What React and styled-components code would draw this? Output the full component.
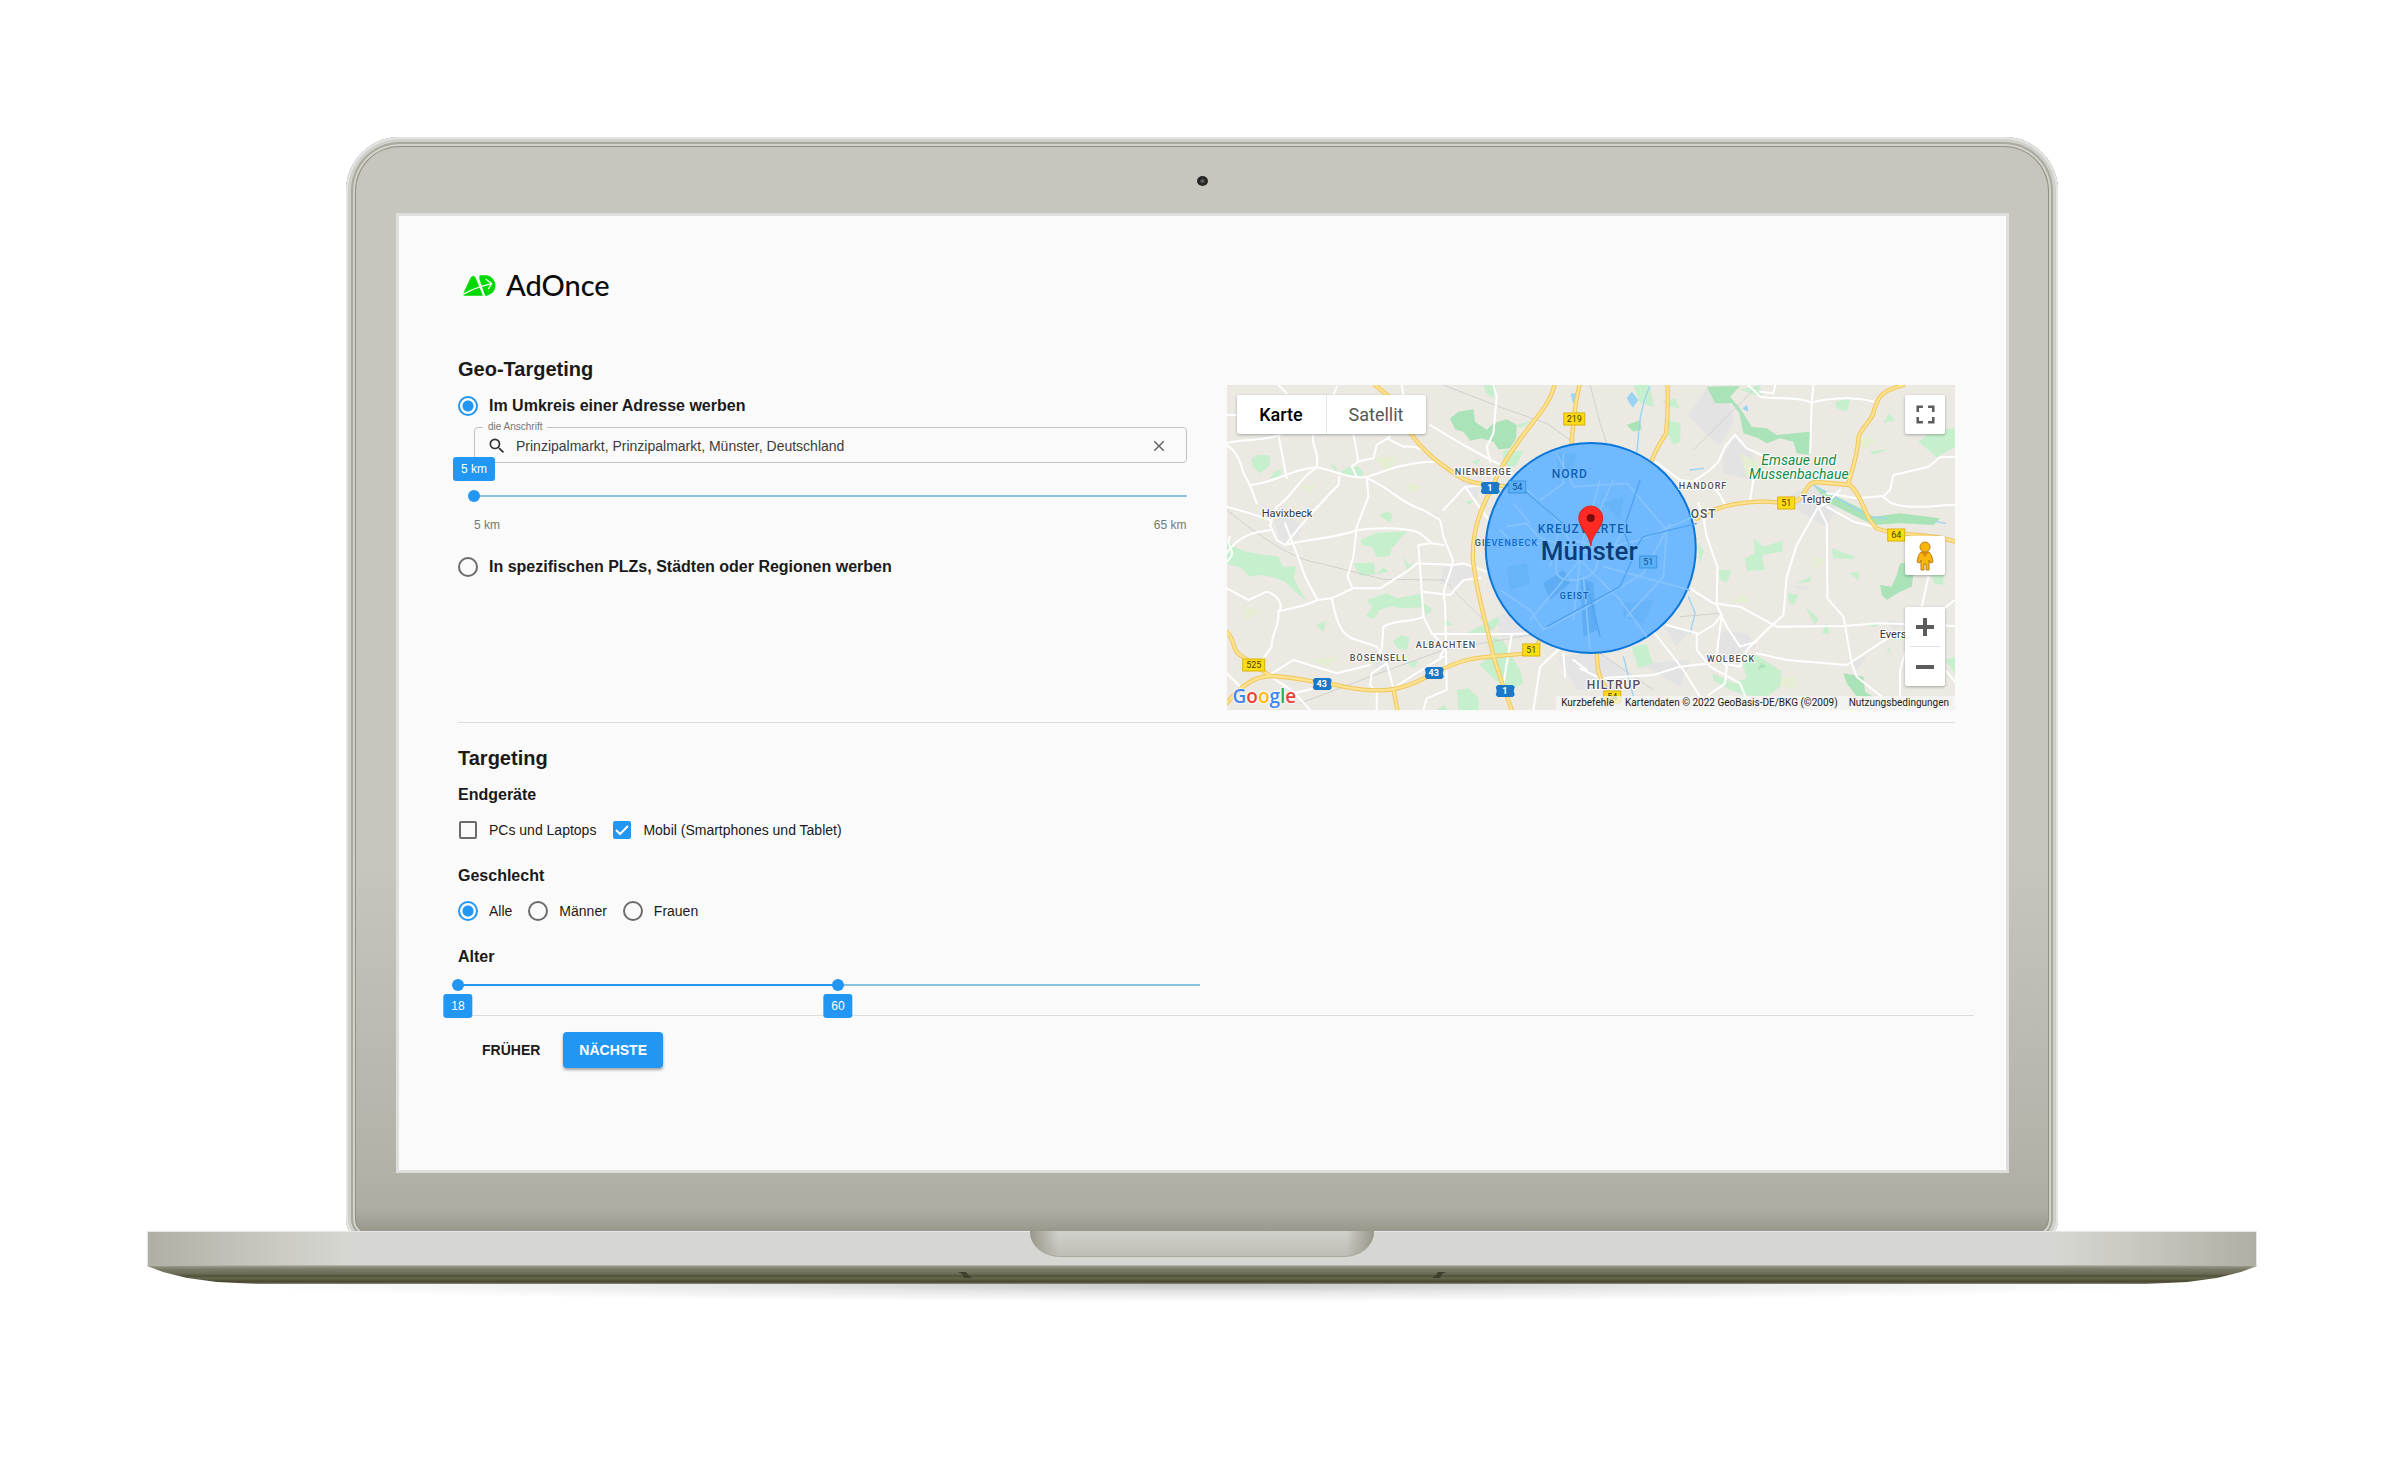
import React, { useState } from 'react';
import styled, { createGlobalStyle } from 'styled-components';
import { MdSearch, MdClose, MdFullscreen } from 'react-icons/md';

const blue = '#2196f3';

const GlobalStyle = createGlobalStyle`
  * {
    box-sizing: border-box;
  }

  body {
    margin: 0;
    background: #fff;
    color: #1a1a1a;
    font-family: 'Liberation Sans', Arial, sans-serif;
    font-size: 14px;
  }
`

const Page = styled.main`
  padding: 137px 143px 120px 147px;
`

const Lid = styled.div`
  margin: 0 199px;
  padding: 76px 49px 70px 50px;
  border-radius: 54px 54px 24px 24px;
  background: linear-gradient(#c7c6be, #c7c6be 65%, #b3b3aa 92%, #adada3 97%, #97978a 99%);
  box-shadow:
    inset 0 0 0 2px #e4e5e2,
    inset 0 0 0 5px #cfd0cb,
    inset 0 0 0 7px #a9a99d,
    inset 0 0 0 9px #d2d2cc,
    inset 0 0 0 10px #92917f;
  position: relative;
`

const Camera = styled.span`
  position: absolute;
  top: 39px;
  left: 50%;
  width: 11px;
  height: 10px;
  margin-left: -5px;
  border-radius: 50%;
  background: radial-gradient(#777, #222 40%, #34342c);
`

const Screen = styled.div`
  padding: 58px 32px 102px 59px;
  border: 3px solid #dedfdc;
  background: #fafafa;
`

const Base = styled.div`
  position: relative;
  height: 35px;
  margin-top: -12px;
  border: 1px solid #e6e7e4;
  border-bottom-color: #b3b3a6;
  background: linear-gradient(90deg, #b0afa5, #c7c6be 110px, #d6d7d2 200px, #d6d7d2 calc(100% - 200px), #c7c6be calc(100% - 110px), #b0afa5);
`

const Notch = styled.div`
  width: 344px;
  height: 26px;
  margin: -1px auto 0;
  border-radius: 0 0 30px 30px / 0 0 25px 25px;
  border-bottom: 1px solid #a9a99e;
  background:
    linear-gradient(90deg, #98978a, transparent 28px, transparent calc(100% - 28px), #98978a),
    linear-gradient(#d0d1cb, #bfbeb5);
`

const Underside = styled.div`
  display: flex;
  justify-content: center;
  align-items: center;
  gap: 460px;
  height: 18px;
  clip-path: polygon(0 0, 100% 0, calc(100% - 16px) 6px, calc(100% - 40px) 12px, calc(100% - 70px) 16px, calc(100% - 110px) 100%, 110px 100%, 70px 16px, 40px 12px, 16px 6px);
  background: linear-gradient(#9b9b8b, #7b7b67 3px, #6a6a55 8px, #505039 10px, #68684f 12px, #45452e 16px, #8e8e84);
`

const Foot = styled.svg`
  width: 14px;
  height: 8px;
`

const Shadow = styled.div`
  height: 18px;
  margin: 0 80px;
  background: radial-gradient(ellipse 50% 100% at 50% 0, #c4c4c4, #e8e8e8 50%, transparent);
`

const Logo = styled.a`
  display: flex;
  align-items: center;
  gap: 9px;
  width: max-content;
  height: 22px;
  margin-left: 5px;
  color: #0b0b0b;
  font-family: Lato, sans-serif;
  font-size: 29px;
  font-weight: 500;
  line-height: 20px;
  text-decoration: none;
`

const Geo = styled.section`
  display: grid;
  grid-template-columns: 1fr 1fr;
  gap: 40px;
  margin: 61px 19px 0 0;
  padding-bottom: 12px;
  border-bottom: 1px solid #dcdcdc;
`

const Title = styled.h2`
  margin: 0 0 13px;
  font-size: 20px;
  line-height: 24px;
`

const GroupTitle = styled.h3`
  margin: 0 0 11px;
  font-size: 16px;
  line-height: 24px;
`

const Options = styled.div`
  display: flex;
  gap: 16px;
  margin-bottom: 22px;
`

const Option = styled.label`
  display: flex;
  align-items: center;
  gap: 11px;
  height: 24px;
  font-size: ${p => (p.$strong ? '16px' : '14px')};
  font-weight: ${p => (p.$strong ? 'bold' : 'normal')};
`

const Radio = styled.input.attrs({ type: 'radio' })`
  appearance: none;
  width: 20px;
  height: 20px;
  margin: 0;
  border: 2px solid #6b6b6b;
  border-radius: 50%;

  &:checked {
    border-color: ${blue};
    background: radial-gradient(circle, ${blue} 5px, transparent 6px);
  }
`

const Tick = styled.span`
  display: grid;
  margin: 1px;

  > * {
    grid-area: 1 / 1;
  }

  svg {
    pointer-events: none;
  }
`

const Checkbox = styled.input.attrs({ type: 'checkbox' })`
  appearance: none;
  width: 18px;
  height: 18px;
  margin: 0;
  border: 2px solid #6b6b6b;
  border-radius: 2px;

  &:checked {
    border-color: ${blue};
    background: ${blue};
  }
`

const Radius = styled.div`
  margin: 4px 0 22px 16px;
`

const Field = styled.fieldset`
  display: flex;
  align-items: center;
  height: 41px;
  min-width: 0;
  margin: 0 0 27px;
  padding: 0 10px 2px 12px;
  border: 1px solid #c4c4bf;
  border-radius: 4px;
  color: #333;

  legend {
    margin-left: -4px;
    padding: 0 5px;
    color: #777;
    font-size: 10px;
    line-height: 10px;
  }
`

const Address = styled.input`
  flex: 1;
  min-width: 0;
  margin: 0 0 0 9px;
  padding: 0;
  border: 0;
  outline: 0;
  background: none;
  color: #3c3c3c;
  font: inherit;
`

const IconButton = styled.button`
  display: flex;
  padding: 8px;
  border: 0;
  background: none;
  color: #666;
`

const SliderBox = styled.div`
  position: relative;
  height: 12px;
  background: linear-gradient(#86c4dc, #86c4dc) center / 100% 2px no-repeat;
`

const Filled = styled.div`
  position: absolute;
  top: 5px;
  height: 2px;
  background: ${blue};
`

const Range = styled.input.attrs({ type: 'range' })`
  appearance: none;
  position: absolute;
  top: 0;
  left: -6px;
  width: calc(100% + 12px);
  height: 12px;
  margin: 0;
  background: none;
  pointer-events: none;

  &::-webkit-slider-thumb {
    appearance: none;
    width: 12px;
    height: 12px;
    border-radius: 50%;
    background: ${blue};
    pointer-events: auto;
  }
`

const Value = styled.output`
  position: absolute;
  top: ${p => (p.$above ? '-33px' : '15px')};
  padding: 0 8px;
  border-radius: 3px;
  background: ${blue};
  color: #fff;
  font-size: 12px;
  line-height: 24px;
  white-space: nowrap;
  transform: translateX(-50%);
`

const Marks = styled.div`
  display: flex;
  justify-content: space-between;
  margin-top: 15px;
  color: #777;
  font-size: 12px;
  line-height: 16px;
`

const Targeting = styled.section`
  padding-top: 23px;
`

const Age = styled.div`
  width: calc(50% - 16px);
  margin-top: -1px;
`

const Actions = styled.footer`
  display: flex;
  gap: 15px;
  margin-top: 24px;
  padding: 16px 16px 0;
  border-top: 1px solid #dcdcdc;
`

const Button = styled.button`
  height: 36px;
  padding: ${p => (p.$primary ? '0 16px' : '0 8px')};
  border: 0;
  border-radius: 4px;
  background: ${p => (p.$primary ? blue : 'none')};
  box-shadow: ${p => (p.$primary ? '0 2px 3px rgba(0, 0, 0, .35)' : 'none')};
  color: ${p => (p.$primary ? '#fff' : '#1a1a1a')};
  font: bold 14px 'Liberation Sans', Arial, sans-serif;
  text-transform: uppercase;
`

const MapBox = styled.div`
  position: relative;
  height: 325px;
  margin-top: 28px;
  overflow: hidden;
  font-family: Roboto, sans-serif;

  > svg {
    display: block;
    width: 100%;
    height: 100%;
  }
`

const MapTypes = styled.div`
  position: absolute;
  top: 10px;
  left: 10px;
  display: flex;
  border-radius: 2px;
  background: #fff;
  box-shadow: 0 1px 3px rgba(0, 0, 0, .3);
`

const MapType = styled.button`
  width: ${p => (p.$active ? '89px' : '100px')};
  height: 39px;
  padding: 0;
  border: 0;
  border-left: ${p => (p.$active ? '0' : '1px solid #e6e6e6')};
  background: none;
  color: ${p => (p.$active ? '#000' : '#565656')};
  font-family: inherit;
  font-size: 18px;
  font-weight: ${p => (p.$active ? 500 : 400)};
`

const MapTools = styled.div`
  position: absolute;
  top: 10px;
  right: 10px;
  bottom: 24px;
  display: flex;
  flex-direction: column;
`

const Tool = styled.div`
  display: flex;
  flex-direction: column;
  align-items: center;
  width: 40px;
  margin-top: ${p => p.$push || '0'};
  border-radius: 2px;
  background: #fff;
  box-shadow: 0 1px 3px rgba(0, 0, 0, .3);

  button {
    display: flex;
    align-items: center;
    justify-content: center;
    width: 40px;
    height: 39px;
    padding: 0;
    border: 0;
    background: none;
    color: #5c5c5c;
  }

  hr {
    width: 30px;
    margin: 0;
    border: 0;
    border-top: 1px solid #e0e0e0;
  }
`

const GoogleMark = styled.a`
  position: absolute;
  bottom: 2px;
  left: 6px;
  font-family: 'Open Sans', sans-serif;
  font-size: 19px;
  font-weight: 600;
  line-height: 24px;
  text-decoration: none;
  text-shadow: 0 0 2px #fff, 0 0 2px #fff, 0 0 3px #fff;
`

const Letter = styled.span`
  color: ${p => p.$color};
`

const Credits = styled.div`
  position: absolute;
  right: 0;
  bottom: 0;
  display: flex;
  gap: 11px;
  padding: 0 6px 0 5px;
  background: rgba(245, 245, 245, .75);
  font-size: 10px;
  line-height: 14px;

  a {
    color: #222;
    text-decoration: none;
  }
`

const Label = styled.text`
  fill: ${p => p.$fill || '#4d4f52'};
  font-size: ${p => p.$size || 12}px;
  font-weight: ${p => p.$weight || 500};
  font-style: ${p => (p.$italic ? 'italic' : 'normal')};
  letter-spacing: ${p => (p.$spaced ? '1px' : '0')};
  stroke: ${p => p.$halo || '#fff'};
  stroke-width: 2px;
  stroke-linejoin: round;
  paint-order: stroke;
`

const westWood = 'M720 145 L745 125 790 118 795 155 830 180 850 160 890 148 920 165 918 205 900 235 865 238 850 215 815 205 780 212 760 185 735 178Z'

// west half of the map, three units to a pixel
const westParks = [
  'M122 268 L145 255 178 256 180 285 150 310 130 292Z',
  'M180 325 L195 303 215 300 210 322Z',
  'M358 282 L378 288 380 306Z M392 305 L420 288 445 290 462 308 450 322 398 318Z',
  'M50 505 L70 530 110 545 165 555 205 560 220 592 258 588 250 625 290 695 245 655 225 635 190 622 150 615 120 620 90 592 50 580Z',
  'M452 510 L500 488 592 484 545 535 540 558 500 562 485 530 455 525Z',
  'M505 435 L530 425 548 432 540 458Z',
  'M430 580 L490 578 497 612 450 618Z M500 612 L520 590 535 605Z M580 562 L590 600 620 572 598 585Z',
  'M470 690 L530 670 560 685 630 672 638 712 570 715 545 708 510 720 490 748 468 738 485 712Z',
  'M640 700 L668 718 648 738Z M318 765 L348 752 340 786Z',
  'M548 812 L575 795 598 805 590 840 562 835Z',
  'M770 790 L865 740 868 762 830 790Z M700 745 L730 765 700 768Z',
  'M808 885 L845 850 850 800 880 812 905 860 930 900 940 940 900 960 855 930Z',
  'M740 960 L775 955 805 985 805 1020 745 1020Z M680 1020 L700 1005 715 1020Z',
  'M820 45 L860 45 848 85 828 70Z M920 165 L970 150 930 175Z M880 240 L940 245 915 290 880 285Z',
  'M785 275 L812 265 800 285Z M590 880 L625 870 612 895Z M765 395 L790 390 780 405Z',
]

const westYellow = [
  'M495 45 L535 78 C570 130 590 170 605 195 C650 255 690 280 725 305 C765 338 810 342 850 345 L910 352',
  'M1033 45 C1020 105 970 150 932 205 S870 290 848 350 C815 410 788 470 788 560 C795 660 830 760 850 860 L880 950 L905 1020',
  'M1108 45 C1092 110 1090 160 1084 225',
  'M50 785 C80 815 60 840 100 862 C140 885 160 905 180 918',
  'M45 1005 C90 950 130 920 180 918 C260 920 320 940 370 943 C440 960 520 970 580 950 C640 935 690 890 770 870 C830 855 890 858 950 850 C985 842 985 810 1000 780',
  'M550 958 L562 1020',
]

const westRoads = [
  'M48 220 C100 205 160 215 205 195 S260 190 270 175', 'M205 45 L230 70 M205 195 L230 325',
  'M50 225 C80 245 90 270 100 310 C120 340 130 370 140 400', 'M125 345 C200 335 250 295 320 292 C380 305 430 330 475 320 C530 300 590 275 680 275',
  'M320 292 C330 240 300 225 310 195', 'M320 292 C260 330 250 380 200 410 L180 465 L200 510 L225 525',
  'M50 410 L120 430 L180 450 M50 550 C80 500 130 485 185 480', 'M225 525 C260 480 310 420 385 345 L388 320',
  'M430 190 L445 275 L425 290 L440 320 M470 325 L475 380 L440 470 L430 560 L412 620 L428 655',
  'M225 525 C300 505 380 505 440 480 C530 470 600 475 630 490 L665 520 L700 525',
  'M470 325 C530 345 570 400 640 420 L690 450 L700 500 L728 570', 'M700 420 L765 350 L850 345',
  'M225 460 L260 550 L285 620 L322 690 L365 685 L428 655 L510 655 L590 605 L620 580 L730 585 L760 580 L830 605',
  'M50 575 C90 540 40 530 60 500 M322 690 C270 715 230 715 205 725', 'M205 725 C210 770 180 800 185 830 L145 885',
  'M50 655 L115 690 L170 665 C220 680 215 720 205 725', 'M365 685 C375 730 385 800 440 810 L500 830 L530 880 L550 955',
  'M665 520 L625 525 L632 620 L640 740 L665 790 L705 830 L690 860', 'M728 570 C725 620 690 650 705 700 L710 960 L650 985 L640 1020',
  'M640 740 C600 760 560 745 520 770 L515 840 L480 870', 'M640 665 L720 675 L760 630 L810 625', 'M665 792 L900 792 L960 790',
  'M905 795 L890 880 L880 945 M550 955 L610 915 L700 860', 'M530 880 L485 910 L480 945 L500 965 L500 1020',
  'M170 920 L250 870 L380 910 L480 885', 'M180 918 L250 965 L300 1020 M250 970 L360 945',
  'M530 205 L580 230 C630 225 660 250 690 278', 'M440 275 L490 265 L500 225 L540 200 M575 45 L580 75', 'M660 165 L760 225 L880 290 L905 310',
  'M850 45 L860 80 L850 190 L830 230 L840 275', 'M690 278 L770 335 M765 350 L800 400 L840 455', 'M370 75 L380 50 M50 135 L80 135',
  'M1060 850 L1065 920 M1050 835 L990 890 L970 1020 M1130 900 L1090 870',
  'M50 910 L100 960',
]

const eastParks = [
  'M160 45 L180 100 220 110 210 45Z M245 95 L285 85 300 115 275 110Z M262 150 L302 160 300 215 280 225 262 190Z',
  'M765 95 L813 85 800 125 770 115Z M910 160 L925 130 945 150Z M870 245 L930 236 880 255Z',
  'M1015 215 L1060 180 1125 175 1125 230 1070 262Z',
  'M495 565 L525 550 520 505 550 530 608 512 606 545 545 555 555 600 500 602Z',
  'M755 535 L825 560 818 568 760 565Z M648 640 L695 618 690 635Z M622 670 L655 675 640 705 628 700Z',
  'M415 600 L455 600 440 638 420 630Z M805 610 L835 605 835 630Z M675 710 L715 745 705 765Z',
  'M725 790 L740 758 750 790Z M850 765 L900 758 890 770Z M398 910 L460 940 500 925 480 850 530 855 605 905 600 950 560 980 500 975 450 960 400 930Z',
  'M1055 610 L1090 610 1090 645 1060 640Z M920 845 L925 830 932 845Z M1095 870 L1125 860 1125 910Z',
  'M155 830 L200 822 218 880 175 895Z M480 60 L540 45 L545 80Z M355 520 L372 545 358 580Z',
]

const eastWoods = [
  'M380 50 L480 48 450 80 480 115 515 170 560 175 590 195 690 185 690 255 650 250 640 215 600 205 560 220 535 205 490 190 478 130 455 100 405 100Z',
  'M900 645 L935 650 950 615 960 580 1005 575 995 650 960 665 920 690 905 675Z',
  'M700 345 L760 375 850 420 880 440 960 430 1080 445 1060 465 960 460 880 465 800 425 740 395Z',
  'M790 910 L850 920 855 965 880 980 830 980 800 940Z M532 898 L545 878 560 890Z M140 165 L180 150 185 178 160 185Z',
]

const eastYellow = [
  'M262 45 C265 110 262 150 258 190 C238 225 228 235 216 270',
  'M350 446 C400 410 470 398 540 395 C590 392 630 408 655 390 C682 368 676 338 710 336 L810 345 C850 380 850 440 890 475 C950 500 1050 488 1125 515',
  'M970 45 C900 65 895 80 882 120 C880 150 845 170 836 200 C830 270 815 300 805 340',
  'M50 850 C52 900 55 915 75 950 L95 985',
]

const eastRoads = [
  'M505 45 L540 80 C600 90 650 78 695 98 L700 45 M695 98 C720 90 800 75 880 95', 'M695 98 L690 250 M540 65 L580 70 L585 45',
  'M225 275 L300 330 L340 335 L390 300 L415 275 L435 230 L465 195 L500 235 L545 255', 'M1125 260 L1080 262 L1045 290 L940 315 L930 360 L910 378 L830 385 L740 370',
  'M905 378 L935 400 C1000 420 1060 405 1125 405', 'M715 410 L650 525 L620 620 L610 735 L560 780 L500 840 L480 890 L430 880',
  'M715 410 L740 460 L742 685 L790 740 L815 880 L830 920 L905 980', 'M740 410 L820 455 L920 480 M780 360 L740 400 L715 412',
  'M330 655 L400 700 L480 710 L590 770 L790 768 L900 760 L1125 768', 'M370 445 L380 500 L412 590 L410 705 L440 770 L480 830 L530 815',
  'M205 765 L310 900 L360 980 M260 765 L350 790 L350 840 L390 890 L480 940 L500 990', 'M425 735 L400 765 L350 795 M425 735 L410 850 L440 890 L435 940 L385 975',
  'M530 850 L620 870 L800 885 L930 800 L980 795', 'M1045 620 L1025 710 M1125 690 L1060 740 M1100 905 L1125 935', 'M975 850 L960 900 L960 985',
  'M0 895 L60 925 L220 915 L300 890 L390 880', 'M390 340 L420 375 L435 405 M355 400 L375 450 M510 390 L520 330',
]

const cityRoads = [
  'M1020 590 L1050 470 L1100 540 L1210 530 L1250 470', 'M890 470 L950 460 L985 500 L1100 545 M910 400 L960 460 M940 350 L1060 470',
  'M1110 570 L960 750 M1110 570 L1090 750 M1110 570 L1230 690 L1310 800', 'M1110 550 L1290 510 L1450 440 M1110 550 L1210 330 M1110 540 L1170 330',
  'M870 660 L960 720 L1000 780 L1150 700 L1300 610 L1380 460', 'M1040 250 L1090 350 L1250 340 L1370 480 L1360 620 L1250 740',
  'M1120 620 L1140 840 M1180 590 L1440 660', 'M990 390 L1060 340 L1060 250 M870 480 L920 530 L990 520',
]

const roadSigns = [
  { x: 337, y: 28, w: 21, text: '219' },
  { x: 16, y: 274, w: 22, text: '525' },
  { x: 296, y: 259, w: 17, text: '51' },
  { x: 551, y: 112, w: 17, text: '51' },
  { x: 661, y: 144, w: 17, text: '64' },
  { x: 377, y: 306, w: 17, text: '54' },
  { x: 282, y: 96, w: 17, text: '54', city: true },
  { x: 413, y: 171, w: 17, text: '51', city: true },
]

const motorwaySigns = [
  { x: 254, y: 97, text: '1' },
  { x: 86, y: 293, text: '43' },
  { x: 198, y: 282, text: '43' },
  { x: 269, y: 300, text: '1' },
]

const YellowRoads = ({ paths }) => (
  <>
    {paths.map(d => <path key={d} d={d} stroke="#f2c55c" strokeWidth="13" />)}
    {paths.map(d => <path key={`in${d}`} d={d} stroke="#ffe48f" strokeWidth="7" />)}
  </>
)

const MapDrawing = () => (
  <svg viewBox="0 0 729 325" preserveAspectRatio="xMidYMid slice" role="img" aria-label="Karte von Münster">
    <rect width="729" height="325" fill="#ebe9e2" />
    <g transform="scale(.33333)" fill="none" strokeLinejoin="round" strokeLinecap="round">
      <g transform="translate(-50 -45)">
        <g fill="#e4e4e4">
          <path d="M190 450 L240 440 L275 470 L265 505 L215 520Z M700 590 L790 585 L780 630 L730 650 L690 640Z" />
          <path d="M860 740 L960 700 L1000 800 L870 800Z M490 840 L545 860 L530 905 L490 890Z M750 330 L810 350 L800 390Z" />
          <path d="M1040 860 L1160 850 L1250 900 L1220 960 L1100 960Z" />
        </g>
        <g fill="#e5eed2">
          <path d="M490 265 L560 260 L540 310Z M270 350 L320 340 L300 370Z M100 710 L150 720 L110 750Z M590 340 L640 350 L600 370Z M300 870 L390 860 L350 890Z" />
        </g>
        <g fill="#c6efcd">{westParks.map(d => <path key={d} d={d} />)}</g>
        <path d={westWood} fill="#aae3b7" />
        <path d="M700 45 L880 115 L1010 160 L1080 210 M50 420 C150 500 250 570 330 580 L520 628 L700 630 L850 780 M270 1000 L480 920 L700 840 L960 795 L1060 770" stroke="#cfd0d0" strokeWidth="3" />
        <path d="M1082 70 H1098 V100 H1088Z" fill="#9bd6fb" />
        <g stroke="#fff" strokeWidth="6">
          {westRoads.map(d => <path key={d} d={d} />)}
        </g>
        <YellowRoads paths={westYellow} />
      </g>
      <g transform="translate(1060 -45)">
        <g fill="#e3e3e4">
          <path d="M325 135 L380 55 L450 100 L460 160 L420 225 L365 180Z M430 260 L465 195 L520 250 L515 330 L430 310Z" />
          <path d="M620 380 L700 345 L770 410 L740 470 L650 420Z M410 780 L500 790 L530 830 L420 870Z M635 650 L690 648 L680 662Z M800 870 L860 860 L830 900Z" />
          <path d="M250 770 L330 780 L290 830Z M920 750 L980 760 L940 780Z M180 880 L330 870 L300 950Z" />
        </g>
        <path d="M480 250 L560 290 L500 320Z M450 700 L490 670 L510 695Z M820 190 L890 210 L850 240Z M700 560 L740 570 L700 600Z M560 930 L650 920 L640 960Z" fill="#e5eed2" />
        <g fill="#c6efcd">{eastParks.map(d => <path key={d} d={d} />)}</g>
        <g fill="#aae3b7">{eastWoods.map(d => <path key={d} d={d} />)}</g>
        <path d="M530 50 L340 240 M30 45 L60 160 L80 220 M300 740 L420 730 M60 850 L220 960" stroke="#cfd0d0" strokeWidth="3" />
        <g stroke="#9bd3f5" strokeWidth="4">
          <path d="M208 50 C170 140 180 190 168 260 M325 680 L345 730 L330 790 M130 860 L160 980 M330 300 L370 295 M700 345 L800 400 L870 440 L920 445" />
          <path d="M142 85 L155 68 L172 90 L158 110Z M490 115 L500 108 L502 122Z M1070 455 L1095 460" fill="#9bd3f5" />
        </g>
        <g stroke="#fff" strokeWidth="6">{eastRoads.map(d => <path key={d} d={d} />)}</g>
        <YellowRoads paths={eastYellow} />
      </g>
    </g>

    <circle cx="364" cy="163" r="105" fill="#70b9ff" stroke="#0a76d8" strokeWidth="2" />
    <g transform="scale(.33333) translate(-50 -45)" fill="none" strokeLinejoin="round">
      <path d="M1040 250 L1100 250 1080 330 1045 320Z M1240 700 L1330 690 1300 760 1240 740Z M890 590 L950 580 960 640 900 660Z M1180 400 L1240 380 1230 450Z" fill="#68b4f8" />
      <path d="M1000 640 L1060 600 L1080 640 L1020 690Z M1110 620 L1150 640 L1160 780 L1120 800Z" fill="#5eacf3" />
      <g stroke="#86c4fb" strokeWidth="5">{cityRoads.map(d => <path key={d} d={d} />)}</g>
      <path d="M1040 610 C1030 530 1080 500 1130 520 C1180 550 1170 610 1120 625 C1080 635 1050 630 1040 610Z" stroke="#86c4fb" strokeWidth="6" />
      <path d="M930 350 L1080 480 M1290 330 L1240 480 L1270 560 L1230 650 L1010 770 M1170 800 L1130 640 M1460 460 L1300 500 L1250 570" stroke="#4fa2f0" strokeWidth="4" />
    </g>

    {roadSigns.map(s => (
      <g key={`${s.x}-${s.y}`}>
        <rect x={s.x} y={s.y} width={s.w} height="12" fill={s.city ? '#5cb0f5' : '#fddc13'} stroke={s.city ? '#3a94e2' : '#d9b400'} />
        <text x={s.x + s.w / 2} y={s.y + 9} textAnchor="middle" fontSize="9" fill={s.city ? '#0d4f98' : '#4a3c00'}>{s.text}</text>
      </g>
    ))}
    {motorwaySigns.map(s => (
      <g key={`${s.x}-${s.y}`}>
        <path d={`M${s.x + 2} ${s.y} h15 l2 2 l-1 4 l1 4 l-2 2 h-15 l-2 -2 l1 -4 l-1 -4Z`} fill="#1b78c8" />
        <text x={s.x + 9} y={s.y + 9} textAnchor="middle" fontSize="9" fontWeight="700" fill="#fff">{s.text}</text>
      </g>
    ))}

    <Label x="35" y="132" $size={11} $weight={400} $fill="#333">Havixbeck</Label>
    <Label x="228" y="90" $size={9} $spaced>NIENBERGE</Label>
    <Label x="123" y="276" $size={9} $spaced>BÖSENSELL</Label>
    <Label x="189" y="263" $size={9} $spaced>ALBACHTEN</Label>
    <Label x="452" y="104" $size={9} $spaced>HANDORF</Label>
    <Label x="464" y="133" $spaced>OST</Label>
    <Label x="480" y="277" $size={9} $spaced>WOLBECK</Label>
    <Label x="360" y="304" $spaced>HILTRUP</Label>
    <Label x="574" y="118" $size={11} $weight={400} $fill="#333">Telgte</Label>
    <Label x="653" y="253" $size={11} $weight={400} $fill="#333">Eversw</Label>
    <Label x="572" y="80" textAnchor="middle" $size={14} $weight={400} $italic $fill="#128a46">Emsaue und</Label>
    <Label x="572" y="94" textAnchor="middle" $size={14} $weight={400} $italic $fill="#128a46">Mussenbachaue</Label>
    <Label x="325" y="93" $spaced $fill="#0c5fb4" $halo="#75bcfb">NORD</Label>
    <Label x="311" y="148" $spaced $fill="#0c5fb4" $halo="#75bcfb">KREUZVIERTEL</Label>
    <Label x="248" y="161" $size={9} $spaced $fill="#0c6dcc" $halo="none">
      <tspan fill="#3f5a75">GI</tspan>EVENBECK
    </Label>
    <Label x="333" y="214" $size={9} $spaced $fill="#0c5fb4" $halo="#75bcfb">GEIST</Label>
    <Label x="314" y="175" $size={26} $weight={500} $fill="#0b3c77" $halo="#75bcfb">Münster</Label>

    <path d="M364 161 C363 149 352 143 352 133 A12 12 0 0 1 376 133 C376 143 365 149 364 161Z" fill="#ff2a23" stroke="#d7271f" />
    <circle cx="364" cy="133" r="4" fill="#7c0a0a" />
  </svg>
)

const CityMap = () => (
  <MapBox>
    <MapDrawing />
    <MapTypes>
      <MapType type="button" $active>Karte</MapType>
      <MapType type="button">Satellit</MapType>
    </MapTypes>
    <MapTools>
      <Tool>
        <button type="button" aria-label="Vollbild"><MdFullscreen size={31} /></button>
      </Tool>
      <Tool $push="102px">
        <button type="button" aria-label="Street View">
          <svg width="20" height="30" viewBox="0 0 20 30" fill="#fbb60b" stroke="#b8801a">
            <path d="M6 11 H14 Q17 13 18 21 L15 22 14 19 V29 H11 V23 H9 V29 H6 V19 L5 22 2 21 Q3 13 6 11Z" />
            <path d="M6 11 L10 16 L14 11Z" fill="#d98a13" stroke="none" />
            <circle cx="10" cy="6" r="5" />
          </svg>
        </button>
      </Tool>
      <Tool $push="auto">
        <button type="button" aria-label="Vergrößern">
          <svg width="18" height="18" viewBox="0 0 18 18"><path d="M7 0h4v7h7v4h-7v7H7v-7H0V7h7z" fill="#5c5c5c" /></svg>
        </button>
        <hr />
        <button type="button" aria-label="Verkleinern">
          <svg width="18" height="4" viewBox="0 0 18 4"><path d="M0 0h18v4H0z" fill="#5c5c5c" /></svg>
        </button>
      </Tool>
    </MapTools>
    <GoogleMark href="#google">
      <Letter $color="#4285f4">G</Letter>
      <Letter $color="#ea4335">o</Letter>
      <Letter $color="#fbbc05">o</Letter>
      <Letter $color="#4285f4">g</Letter>
      <Letter $color="#34a853">l</Letter>
      <Letter $color="#ea4335">e</Letter>
    </GoogleMark>
    <Credits>
      <a href="#kurzbefehle">Kurzbefehle</a>
      <span>Kartendaten © 2022 GeoBasis-DE/BKG (©2009)</span>
      <a href="#nutzung">Nutzungsbedingungen</a>
    </Credits>
  </MapBox>
)

const percent = (value, min, max) => `${((value - min) / (max - min)) * 100}%`

const DistanceSlider = () => {
  const [km, setKm] = useState(5)
  return (
    <>
      <SliderBox>
        <Range aria-label="Umkreis" min="5" max="65" value={km} onChange={e => setKm(+e.target.value)} />
        <Value $above style={{ left: percent(km, 5, 65) }}>{km} km</Value>
      </SliderBox>
      <Marks><span>5 km</span><span>65 km</span></Marks>
    </>
  )
}

const AgeSlider = () => {
  const [from, setFrom] = useState(18)
  const [to, setTo] = useState(60)
  const left = percent(from, 18, 100)
  const right = percent(to, 18, 100)
  return (
    <SliderBox>
      <Filled style={{ left, width: `calc(${right} - ${left})` }} />
      <Range aria-label="Alter von" min="18" max="100" value={from} onChange={e => setFrom(Math.min(+e.target.value, to))} />
      <Range aria-label="Alter bis" min="18" max="100" value={to} onChange={e => setTo(Math.max(+e.target.value, from))} />
      <Value style={{ left }}>{from}</Value>
      <Value style={{ left: right }}>{to}</Value>
    </SliderBox>
  )
}

const CheckOption = ({ label, checked, onChange }) => (
  <Option>
    <Tick>
      <Checkbox checked={checked} onChange={onChange} />
      {checked && (
        <svg width="18" height="18" viewBox="0 0 18 18">
          <path d="M3 9 L7 13 L15 5" fill="none" stroke="#fff" strokeWidth="2" />
        </svg>
      )}
    </Tick>
    {label}
  </Option>
)

const GeoTargeting = () => {
  const [mode, setMode] = useState('address')
  const [address, setAddress] = useState('Prinzipalmarkt, Prinzipalmarkt, Münster, Deutschland')
  return (
    <Geo>
      <div>
        <Title>Geo-Targeting</Title>
        <Option $strong>
          <Radio name="mode" checked={mode === 'address'} onChange={() => setMode('address')} />
          Im Umkreis einer Adresse werben
        </Option>
        <Radius>
          <Field>
            <legend><label htmlFor="address">die Anschrift</label></legend>
            <MdSearch size={20} />
            <Address id="address" value={address} onChange={e => setAddress(e.target.value)} />
            <IconButton type="button" aria-label="Löschen" onClick={() => setAddress('')}><MdClose size={18} /></IconButton>
          </Field>
          <DistanceSlider />
        </Radius>
        <Option $strong>
          <Radio name="mode" checked={mode === 'regions'} onChange={() => setMode('regions')} />
          In spezifischen PLZs, Städten oder Regionen werben
        </Option>
      </div>
      <CityMap />
    </Geo>
  )
}

const Audience = () => {
  const [desktop, setDesktop] = useState(false)
  const [mobile, setMobile] = useState(true)
  const [gender, setGender] = useState('Alle')
  return (
    <Targeting>
      <Title>Targeting</Title>
      <GroupTitle>Endgeräte</GroupTitle>
      <Options>
        <CheckOption label="PCs und Laptops" checked={desktop} onChange={() => setDesktop(!desktop)} />
        <CheckOption label="Mobil (Smartphones und Tablet)" checked={mobile} onChange={() => setMobile(!mobile)} />
      </Options>
      <GroupTitle>Geschlecht</GroupTitle>
      <Options>
        {['Alle', 'Männer', 'Frauen'].map(name => (
          <Option key={name}>
            <Radio name="gender" checked={gender === name} onChange={() => setGender(name)} />
            {name}
          </Option>
        ))}
      </Options>
      <GroupTitle>Alter</GroupTitle>
      <Age><AgeSlider /></Age>
    </Targeting>
  )
}

const App = () => (
  <>
    <GlobalStyle />
    <Page>
      <Lid>
        <Camera />
        <Screen>
          <Logo href="#start">
            <svg width="34" height="21" viewBox="0 0 102 63">
              <path d="M0 57 L22 10 Q29 -3 37 7 L60 62 H4 Q0 62 0 57Z M50 1 H72 A31 31 0 0 1 72 62 H66 L48 20Z" fill="#00d900" />
              <path d="M0 58 Q40 36 86 26 M68 12 L86 26 L76 42 M44 4 L64 62" fill="none" stroke="#fafafa" strokeWidth="4" />
            </svg>
            AdOnce
          </Logo>
          <GeoTargeting />
          <Audience />
          <Actions>
            <Button type="button">Früher</Button>
            <Button type="button" $primary>Nächste</Button>
          </Actions>
        </Screen>
      </Lid>
      <Base><Notch /></Base>
      <Underside>
        <Foot viewBox="0 0 14 8"><path d="M0 1 H8 L10 4 L14 7 H6 L4 3Z" fill="#3e3e2b" /></Foot>
        <Foot viewBox="0 0 14 8"><path d="M14 1 H6 L4 4 L0 7 H8 L10 3Z" fill="#3e3e2b" /></Foot>
      </Underside>
      <Shadow />
    </Page>
  </>
)

export default App;
